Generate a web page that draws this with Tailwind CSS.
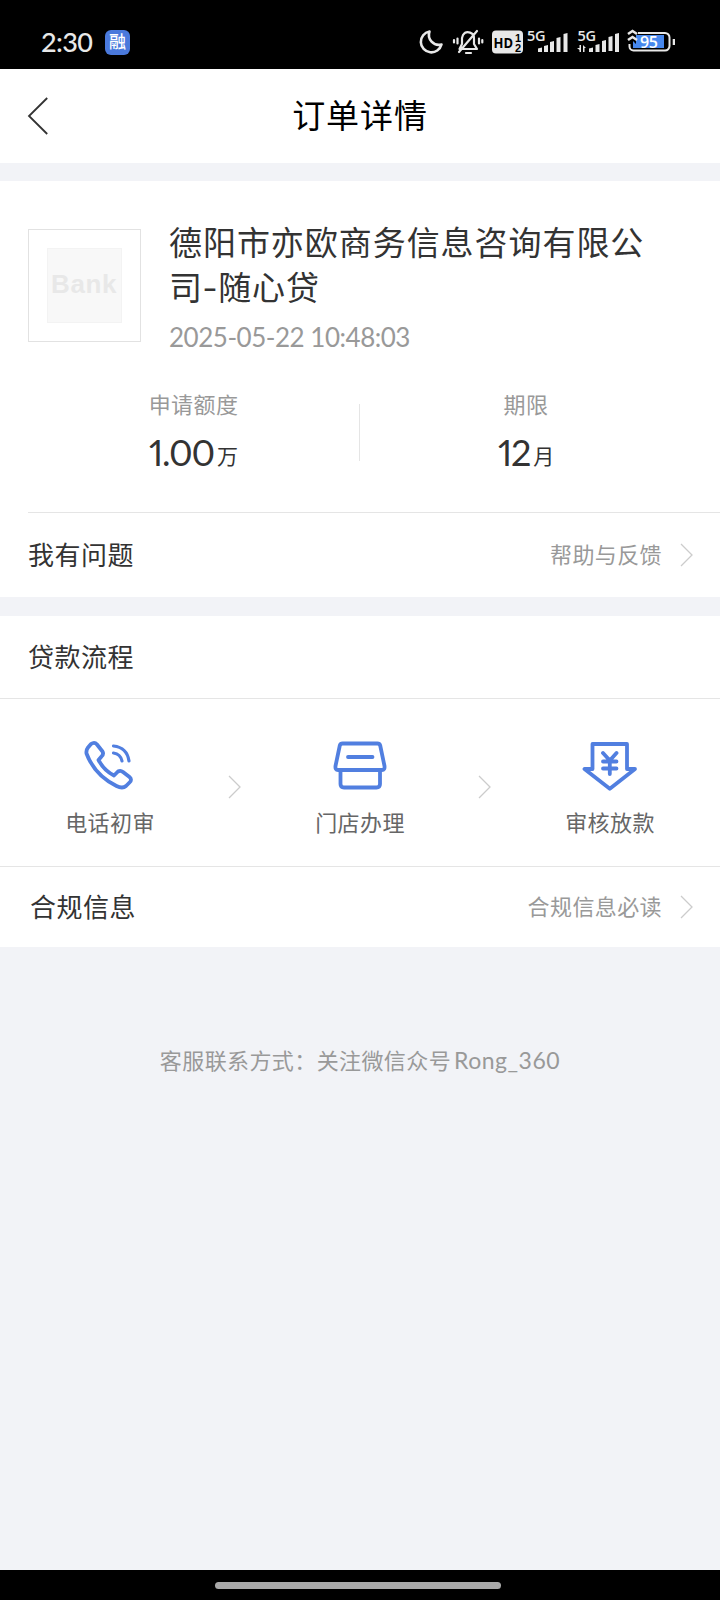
<!DOCTYPE html>
<html lang="zh-CN">
<head>
<meta charset="utf-8">
<title>订单详情</title>
<script src="https://cdn.jsdelivr.net/npm/@tailwindcss/browser@4"></script>
</head>
<body class="w-[720px] h-[1600px] overflow-hidden flex flex-col bg-[#f2f3f7] text-[#333] font-['Lato','Noto_Sans_CJK_SC',sans-serif] whitespace-nowrap">
  <!-- Status bar -->
  <div class="h-[69px] shrink-0 bg-black text-[#e8e8e8] flex items-center pl-[41px] pr-[45px] pt-[15px]">
    <span class="w-[64px] text-[27px] leading-[54px] font-medium tracking-[-0.6px] font-['Lato']">2:30</span>
    <span class="size-[25px] rounded-[6px] bg-[#4a79dc] text-white text-[17px] leading-[24px] text-center font-medium">融</span>
    <svg class="ml-auto" width="258" height="42" viewBox="417 21 258 42" fill="none" stroke="#e8e8e8">
      <path d="M429.500 31.500A10.500 10.500 0 1 0 441.500 44.500A10 10 0 0 1 429.500 31.500Z" stroke-width="2.600" stroke-linejoin="round"/>
      <g stroke-width="2.200" stroke-linecap="round" stroke-linejoin="round">
        <path d="M459.500 49H477L474 44V39A6 6 0 0 0 463 35L462 38V44ZM466 53H471M477 31L459 52M457.500 38.500V43.500M454 40V42.500M479 38.500V43.500M482.300 40V42.500"/>
      </g>
      <rect x="492" y="30.500" width="31" height="23" rx="4" fill="#e8e8e8" stroke="none"/>
      <g fill="#000" stroke="none" font-family="Open Sans" font-weight="700">
        <text x="493.500" y="47.500" font-size="15" textLength="19.500" lengthAdjust="spacingAndGlyphs">HD</text>
        <text x="515" y="41.500" font-size="11" font-family="Liberation Sans">1</text>
        <text x="515" y="52" font-size="11" font-family="Liberation Sans">2</text>
      </g>
      <g fill="#e8e8e8" stroke="none">
        <text x="527" y="41" font-size="14.500" font-family="Open Sans" font-weight="600" textLength="18.500">5G</text>
        <path d="M538 48.500l4-1v4.500h-4zM544 46l4-1v7h-4zM550 42l4-1v11h-4zM556.500 38l4-1v15h-4zM563.500 34l4-1v19h-4z"/>
        <text x="577.500" y="41" font-size="14.500" font-family="Open Sans" font-weight="600" textLength="18.500">5G</text>
        <path d="M589 48.500l4-1v4.500h-4zM595.500 45l4-1v8h-4zM602 41l4-1v12h-4zM608.500 37l4-1v15h-4zM615 34l4-1v19h-4z"/>
        <path d="M581 45v7h-1.500l0-2l-2.500-2h2.500v-3zM583 45l3 3h-1.500v4h-1.500z"/>
      </g>
      <path d="M638 33H665a4.500 4.500 0 0 1 4.500 4.500V46a4.500 4.500 0 0 1-4.500 4.500H633.500a4 4 0 0 1-4-4V44" stroke-width="2"/>
      <path d="M633 41l3 3v-9h28v13h-31z" fill="#4788ee" stroke="none"/>
      <path d="M628 34l4.500-3l4.500 3M628 40l4.500-3l4.500 3" stroke-width="2.600"/>
      <path d="M674 39v6" stroke-width="2.600"/>
      <text x="640" y="47.500" font-size="16" font-family="Open Sans" font-weight="600" fill="#fff" stroke="none" textLength="18">95</text>
    </svg>
  </div>

  <!-- Title bar -->
  <header class="h-[94px] shrink-0 bg-white grid grid-cols-[100px_1fr_100px] items-center text-black">
    <svg class="ml-[27px]" width="22" height="38" viewBox="0 0 22 38" fill="none" stroke="#333" stroke-width="1.800"><path d="M20.200 1L2 19L20.200 37"/></svg>
    <h1 class="text-center text-[33px] leading-[46px] tracking-[0.9px] pb-[3px]">订单详情</h1>
  </header>

  <!-- Order summary -->
  <section class="mt-[18px] h-[416px] shrink-0 bg-white flex flex-col">
    <div class="flex pt-[39px] pl-[28px]">
      <div class="mt-[9px] size-[113px] border border-[#e2e2e2] flex items-center justify-center">
        <div class="size-[75px] mr-px bg-[#f8f8f8] border border-[#f3f3f3] text-[#e8e8e8] text-[26px] leading-[70px] font-bold font-['Liberation_Sans'] tracking-[0.6px] flex justify-center">Bank</div>
      </div>
      <div class="ml-[28px]">
        <h2 class="text-[33px] leading-[45px] tracking-[0.95px]">德阳市亦欧商务信息咨询有限公<br>司<span class="inline-block scale-x-[1.3] mx-px">-</span>随心贷</h2>
        <p class="mt-[9px] text-[26px] leading-[36px] text-[#999] tracking-[-0.48px]">2025-05-22 10:48:03</p>
      </div>
    </div>
    <div class="mt-[35px] flex">
      <div class="w-[359px] pl-[28px] flex flex-col items-center">
        <p class="text-[22px] leading-[30px] text-[#999] tracking-[0.4px]">申请额度</p>
        <p class="mt-[7px] text-[36px] leading-[50px]"><span class="tracking-[-1.2px] proportional-nums">1.00</span><span class="inline-block -translate-y-[2px] text-[21px] leading-none ml-[3px]">万</span></p>
      </div>
      <div class="mt-[14px] w-px h-[57px] bg-[#e5e5e5]"></div>
      <div class="w-[332px] flex flex-col items-center">
        <p class="text-[22px] leading-[30px] text-[#999] tracking-[0.4px]">期限</p>
        <p class="mt-[7px] text-[36px] leading-[50px]"><span class="tracking-[-1.2px] proportional-nums">12</span><span class="inline-block -translate-y-[2px] text-[21px] leading-none ml-[3px]">月</span></p>
      </div>
    </div>
    <div class="mt-auto ml-[28px] h-[85px] border-t border-[#e5e5e5] flex items-center pr-[27px]">
      <span class="text-[26px] tracking-[0.5px]">我有问题</span>
      <span class="ml-auto text-[22px] tracking-[0.4px] text-[#999] pb-[2px]">帮助与反馈</span>
      <svg class="ml-[18px]" width="13" height="24" viewBox="0 0 13 24" fill="none" stroke="#ccc" stroke-width="1.300"><path d="M1 1L12 12L1 23"/></svg>
    </div>
  </section>

  <!-- Loan process -->
  <section class="mt-[19px] h-[331px] shrink-0 bg-white flex flex-col">
    <h3 class="h-[83px] border-b border-[#e5e5e5] pl-[28px] text-[26px] leading-[82px] tracking-[0.5px]">贷款流程</h3>
    <div class="h-[167px] flex justify-between px-[60px] pt-[39px] text-[#666]">
      <div class="w-[100px] flex flex-col items-center">
        <svg width="56" height="56" viewBox="82 738 56 56" fill="none" stroke="#517fe0" stroke-width="3.800" stroke-linecap="round" stroke-linejoin="round">
          <path d="M91 744Q94.500 741.500 97 744.500L102.500 751.500Q104 754 101.500 756.500L98.500 760Q104 770.500 114 775.500L118 771.500Q120.500 770 123 772L129.500 777Q132.500 779.500 129.500 782.500L126 786Q122.500 789 116.500 786Q94.500 775 86.500 753.500Q86 750 88 747.500Z"/>
          <path d="M113.500 746Q127 747.500 129 761M113.500 753Q120.500 754 122 761" stroke-width="3.200"/>
        </svg>
        <span class="text-[22px] leading-[30px] tracking-[0.4px] mt-[14px]">电话初审</span>
      </div>
      <svg class="mt-[37px] -ml-[2px]" width="13" height="24" viewBox="0 0 13 24" fill="none" stroke="#ccc" stroke-width="1.300"><path d="M1 1L12 12L1 23"/></svg>
      <div class="w-[100px] flex flex-col items-center">
        <svg width="56" height="56" viewBox="332 738 56 56" fill="none" stroke="#517fe0" stroke-width="3.800" stroke-linecap="round" stroke-linejoin="round">
          <path d="M342.500 743.500H377.500Q379.500 743.500 380.200 745.500L384.500 766Q385 770 382 770H338Q335 770 335.500 766L339.800 745.500Q340.500 743.500 342.500 743.500Z"/>
          <path d="M340.500 770V784Q340.500 787.500 344 787.500H376.500Q380 787.500 380 784V770M348 757H372.500"/>
        </svg>
        <span class="text-[22px] leading-[30px] tracking-[0.4px] mt-[14px]">门店办理</span>
      </div>
      <svg class="mt-[37px] -ml-[2px]" width="13" height="24" viewBox="0 0 13 24" fill="none" stroke="#ccc" stroke-width="1.300"><path d="M1 1L12 12L1 23"/></svg>
      <div class="w-[100px] flex flex-col items-center">
        <svg width="56" height="56" viewBox="582 738 56 56" fill="none" stroke="#517fe0" stroke-width="3.800" stroke-linecap="round" stroke-linejoin="round">
          <path d="M592.500 744H627V769H635L609.800 788.800L584.500 769H592.500Z"/>
          <path d="M603 753L609.800 760.500L616.500 753M603 761.500H616.500M603 768.500H616.500M609.800 761V774"/>
        </svg>
        <span class="text-[22px] leading-[30px] tracking-[0.4px] mt-[14px]">审核放款</span>
      </div>
    </div>
    <div class="h-[81px] border-t border-[#e5e5e5] flex items-center pl-[30px] pr-[27px]">
      <span class="text-[26px] tracking-[0.5px]">合规信息</span>
      <span class="ml-auto text-[22px] tracking-[0.4px] text-[#999] pb-[2px]">合规信息必读</span>
      <svg class="ml-[18px]" width="13" height="24" viewBox="0 0 13 24" fill="none" stroke="#ccc" stroke-width="1.300"><path d="M1 1L12 12L1 23"/></svg>
    </div>
  </section>

  <p class="mt-[97px] text-center text-[#999] text-[22px] leading-[32px] tracking-[0.4px]">客服联系方式：关注微信众号<span class="text-[23px] tracking-[0.5px] ml-[3px]">Rong_360</span></p>

  <!-- Gesture bar -->
  <div class="mt-auto h-[30px] shrink-0 bg-black flex items-center justify-center pr-[4px]">
    <div class="w-[286px] h-[7px] rounded-full bg-[#a8a8a8]"></div>
  </div>
</body>
</html>
